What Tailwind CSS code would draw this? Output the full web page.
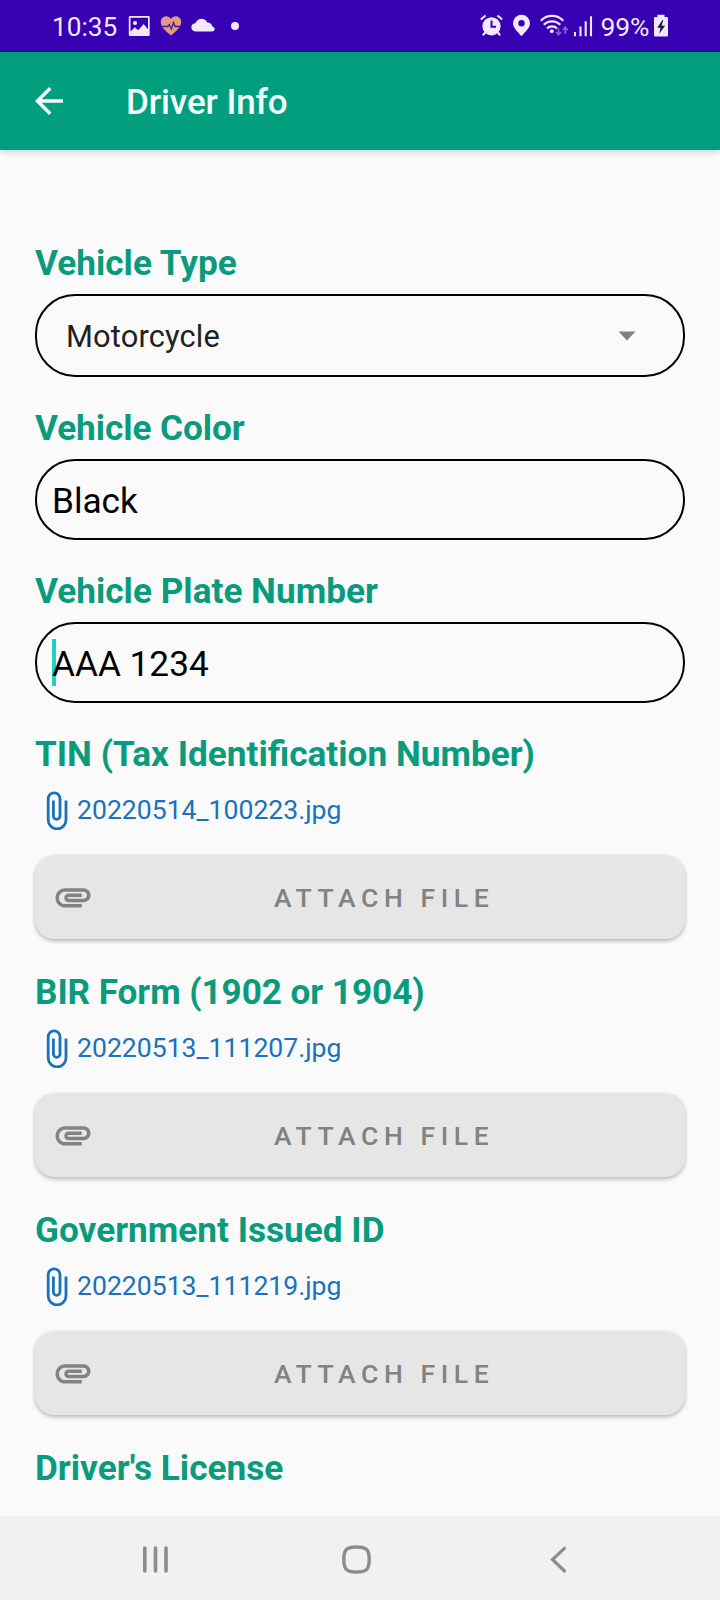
<!DOCTYPE html>
<html lang="en">
<head>
<meta charset="utf-8">
<title>Driver Info</title>
<script src="https://cdn.jsdelivr.net/npm/@tailwindcss/browser@4"></script>
</head>
<body class="bg-[#fafafa]">
<svg class="hidden">
  <symbol id="clip" viewBox="0 0 22 40"><path d="M20 10.5V30a8.9 8.9 0 0 1-17.8 0V8.7a5.9 5.9 0 0 1 11.8 0V26a3.3 3.3 0 0 1-6.6 0V10.5" fill="none" stroke="currentColor" stroke-width="2.8"/></symbol>
  <symbol id="attachment" viewBox="0 0 24 24"><path fill="currentColor" d="M2 12.5C2 9.46 4.46 7 7.5 7H18c2.21 0 4 1.79 4 4s-1.79 4-4 4H9.5C8.12 15 7 13.88 7 12.5S8.12 10 9.5 10H17v2H9.41c-.55 0-.55 1 0 1H18c1.1 0 2-.9 2-2s-.9-2-2-2H7.5C5.57 9 4 10.57 4 12.5S5.57 16 7.5 16H17v2H7.5C4.46 18 2 15.54 2 12.5z"/></symbol>
</svg>
<div class="w-[720px] h-[1600px] flex flex-col overflow-hidden font-[Roboto,sans-serif] whitespace-nowrap">
  <!-- Status bar -->
  <header class="h-[52px] shrink-0 bg-[#3700b3] text-[#f1e8ff] flex items-start justify-between">
    <div class="flex pl-[52px]">
      <span class="w-[76px] pt-[11px] text-[26.200px] leading-[32px]">10:35</span>
      <svg class="w-[22px] h-[52px]" viewBox="128 0 22 52"><path fill="currentColor" fill-rule="evenodd" d="M130 16h18.500q1.200 0 1.200 1.200v17.600q0 1.200-1.200 1.200h-18.500q-1.200 0-1.200-1.200v-17.600q0-1.200 1.200-1.200zM130.500 17.800v13.700l4.300-4.300 3.400 3 5.500-6.200 4.300 5.300v-11.500z"/><circle cx="135" cy="23" r="2.100" fill="currentColor"/></svg>
      <svg class="w-[22px] h-[52px] ml-[10px]" viewBox="160 0 22 52"><path fill="#dd9c80" d="M171 35.500C165 30.500 160.800 27 160.800 22c0-3.200 2.400-5.700 5.400-5.700 2 0 3.700 1 4.800 2.600 1.100-1.600 2.800-2.600 4.800-2.600 3 0 5.400 2.500 5.400 5.700 0 5-4.200 8.500-10.200 13.500z"/><path d="M161 26.500h6.800l1.500-2 2 4.500 2.200-6.500 1.500 4h6" fill="none" stroke="#4a1a8c" stroke-width="1.300"/></svg>
      <svg class="w-[24px] h-[52px] ml-[9px]" viewBox="191 0 24 52"><path fill="currentColor" d="M196 31.500c-2.700 0-4.700-1.800-4.700-4.200s2-4.200 4.300-4.300c1-2.600 3-4.200 5.900-4.200 2.600 0 4.700 1.300 5.800 3.600 3 0 4.800 1.800 5 4.200 1.500.3 2.400 1.300 2.400 2.500 0 1.400-1 2.400-2.600 2.400z"/></svg>
      <svg class="w-[10px] h-[52px] ml-[15px]" viewBox="230 0 10 52"><circle cx="235" cy="26" r="4" fill="currentColor"/></svg>
    </div>
    <div class="flex pr-[52px]">
      <svg class="w-[24px] h-[52px]" viewBox="480 0 24 52"><circle cx="491.500" cy="26.300" r="9.100" fill="currentColor"/><path d="M480.800 19.500l4.800-4M502.200 19.500l-4.800-4M485.500 32l-2.600 3.400M497.500 32l2.600 3.400" stroke="currentColor" stroke-width="2.100"/><path d="M491.500 20.500v6.300h4.500" fill="none" stroke="#3700b3" stroke-width="1.900"/></svg>
      <svg class="w-[18px] h-[52px] ml-[9px]" viewBox="513 0 18 52"><path fill="currentColor" fill-rule="evenodd" d="M521.500 36.300c-3.500-4.200-8.500-8.300-8.500-13a8.500 8.500 0 0 1 17 0c0 4.700-5 8.800-8.500 13zM521.500 20a3.200 3.200 0 1 0 0 6.400 3.200 3.200 0 0 0 0-6.400z"/></svg>
      <svg class="w-[30px] h-[52px] ml-[9px]" viewBox="540 0 30 52"><g fill="none" stroke="currentColor" stroke-width="2.200"><path d="M540.800 20.800a15.500 15.500 0 0 1 22.500 0"/><path d="M543.800 24.800a11.500 11.500 0 0 1 16.500 0"/><path d="M547 28.500a7 7 0 0 1 10 0"/></g><circle cx="551.800" cy="31.200" r="1.900" fill="currentColor"/><path d="M558.500 28v6.500M556 32l2.500 2.800 2.500-2.800M565.300 34v-6.500M562.800 30l2.500-2.800 2.500 2.800" fill="none" stroke="#8a5ddd" stroke-width="1.600"/></svg>
      <svg class="w-[20px] h-[52px] ml-[3px]" viewBox="573 0 20 52"><path d="M575 32v4.200M580.500 26.500v9.700M585.700 21.200v15M591 16.200v20" stroke="currentColor" stroke-width="2.100"/></svg>
      <span class="w-[53px] pl-[7.500px] pt-[11px] text-[26.500px] leading-[32px] tracking-[-0.1px]">99%</span>
      <svg class="w-[15px] h-[52px] ml-[7px]" viewBox="653 0 15 52"><path fill="currentColor" d="M657.500 17v-2.200h7v2.200h2.300q1.200 0 1.200 1.200v17q0 1.200-1.200 1.200h-11.600q-1.200 0-1.200-1.200v-17q0-1.200 1.200-1.200z"/><path fill="#1d1330" d="M662.500 20l-5.300 7.800h3.300l-1.300 6 5.900-8h-3.600l1.800-5.800z"/></svg>
    </div>
  </header>
  <!-- App bar -->
  <nav class="h-[98px] shrink-0 bg-[#029f7e] text-[#f3fffc] flex items-center pl-[28px] shadow-[0_2px_7px_rgba(0,0,0,0.16)]">
    <svg class="w-[42px] h-[42px]" viewBox="0 0 24 24"><path fill="currentColor" d="M20 11H7.830l5.590-5.590L12 4l-8 8 8 8 1.410-1.410L7.830 13H20v-2z"/></svg>
    <h1 class="ml-[56px] pt-[3px] text-[35px] leading-[40px] font-medium tracking-[-0.1px]">Driver Info</h1>
  </nav>
  <!-- Form -->
  <main class="flex-1 min-h-0 overflow-hidden px-[35px] pt-[93px] text-black">
    <h2 class="text-[35.200px] leading-[40px] font-bold text-[#0a9b7c]">Vehicle Type</h2>
    <div class="mt-[11px] h-[83px] border-2 border-black rounded-[40px] flex items-center justify-between pl-[29px] pr-[47px]">
      <span class="pt-[3px] text-[30.800px] leading-[36px] text-[#212121] tracking-[0.150px]">Motorcycle</span>
      <svg class="w-[18px] h-[10px]" viewBox="0 0 18 10"><path fill="#808080" d="M.5.500h17L9 9.500z"/></svg>
    </div>
    <h2 class="mt-[31px] text-[35.200px] leading-[40px] font-bold text-[#0a9b7c] tracking-[-0.080px]">Vehicle Color</h2>
    <div class="mt-[11px] h-[81px] border-2 border-black rounded-[40px] flex items-center pl-[15px] pt-[3px]">
      <span class="text-[35.200px] leading-[40px]">Black</span>
    </div>
    <h2 class="mt-[31px] text-[35.200px] leading-[40px] font-bold text-[#0a9b7c]">Vehicle Plate Number</h2>
    <div class="mt-[11px] h-[81px] border-2 border-black rounded-[40px] flex items-center pl-[15px] pt-[3px]">
      <span class="relative text-[35.200px] leading-[40px]"><i class="absolute left-0 -top-[5px] w-[4px] h-[47px] bg-[#1cd3c5]"></i><span class="relative">AAA 1234</span></span>
    </div>

    <section class="mt-[31px]">
      <h2 class="text-[35.200px] leading-[40px] font-bold text-[#0a9b7c]">TIN (Tax Identification Number)</h2>
      <div class="mt-[16px] h-[40px] pl-[11px] flex items-center text-[#1a71be]">
        <svg class="w-[22px] h-[40px]"><use href="#clip"/></svg>
        <span class="ml-[9px] text-[26.600px] leading-[32px]">20220514_100223.jpg</span>
      </div>
      <button class="mt-[25px] w-full h-[84px] rounded-[20px] bg-[#e6e6e6] text-[#828282] flex items-center pl-[17px] shadow-[0_2px_4px_rgba(0,0,0,0.28)]">
        <svg class="w-[42px] h-[42px]"><use href="#attachment"/></svg>
        <span class="ml-[180px] pt-px text-[26.500px] leading-[32px] font-medium tracking-[5.600px]">ATTACH FILE</span>
      </button>
    </section>
    <section class="mt-[33px]">
      <h2 class="text-[35.200px] leading-[40px] font-bold text-[#0a9b7c] tracking-[-0.080px]">BIR Form (1902 or 1904)</h2>
      <div class="mt-[16px] h-[40px] pl-[11px] flex items-center text-[#1a71be]">
        <svg class="w-[22px] h-[40px]"><use href="#clip"/></svg>
        <span class="ml-[9px] text-[26.600px] leading-[32px]">20220513_111207.jpg</span>
      </div>
      <button class="mt-[25px] w-full h-[84px] rounded-[20px] bg-[#e6e6e6] text-[#828282] flex items-center pl-[17px] shadow-[0_2px_4px_rgba(0,0,0,0.28)]">
        <svg class="w-[42px] h-[42px]"><use href="#attachment"/></svg>
        <span class="ml-[180px] pt-px text-[26.500px] leading-[32px] font-medium tracking-[5.600px]">ATTACH FILE</span>
      </button>
    </section>
    <section class="mt-[33px]">
      <h2 class="text-[35.200px] leading-[40px] font-bold text-[#0a9b7c]">Government Issued ID</h2>
      <div class="mt-[16px] h-[40px] pl-[11px] flex items-center text-[#1a71be]">
        <svg class="w-[22px] h-[40px]"><use href="#clip"/></svg>
        <span class="ml-[9px] text-[26.600px] leading-[32px]">20220513_111219.jpg</span>
      </div>
      <button class="mt-[25px] w-full h-[84px] rounded-[20px] bg-[#e6e6e6] text-[#828282] flex items-center pl-[17px] shadow-[0_2px_4px_rgba(0,0,0,0.28)]">
        <svg class="w-[42px] h-[42px]"><use href="#attachment"/></svg>
        <span class="ml-[180px] pt-px text-[26.500px] leading-[32px] font-medium tracking-[5.600px]">ATTACH FILE</span>
      </button>
    </section>
    <h2 class="mt-[33px] text-[35.200px] leading-[40px] font-bold text-[#0a9b7c]">Driver's License</h2>
  </main>
  <!-- System navigation -->
  <footer class="h-[84px] shrink-0 bg-[#f1f1f1] text-[#8d8d8d] flex items-start pt-[28px] pl-[140px]">
    <svg class="w-[32px] h-[32px]" viewBox="0 0 32 32"><path d="M4.800 4v23M15.500 4v23M26 4v23" stroke="currentColor" stroke-width="3.600" stroke-linecap="round"/></svg>
    <svg class="w-[32px] h-[32px] ml-[168px]" viewBox="0 0 32 32"><path d="M16.500 3C26.500 3 29.200 5.700 29.200 15.500S26.500 28 16.500 28 3.800 25.300 3.800 15.500 6.500 3 16.500 3z" fill="none" stroke="currentColor" stroke-width="3.400"/></svg>
    <svg class="w-[32px] h-[32px] ml-[172px]" viewBox="0 0 32 32"><path d="M20.500 4.300L8.500 15.500l12 11.500" fill="none" stroke="currentColor" stroke-width="3.200" stroke-linecap="round"/></svg>
  </footer>
</div>
</body>
</html>
